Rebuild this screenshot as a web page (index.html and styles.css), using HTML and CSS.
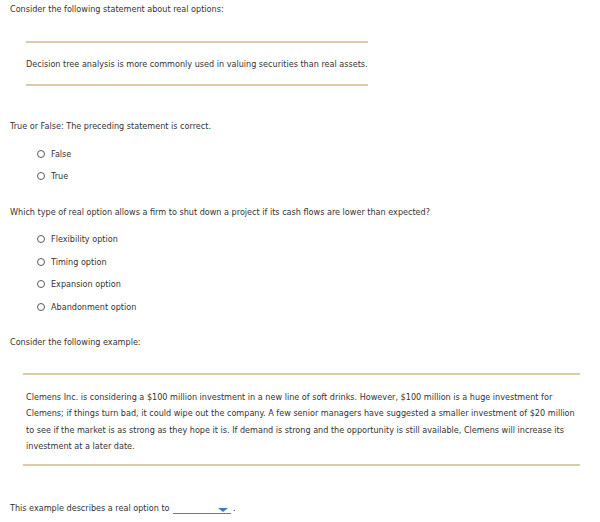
FILE: index.html
```html
<!DOCTYPE html>
<html>
<head>
<meta charset="utf-8">
<link rel="stylesheet" href="styles.css">
</head>
<body>
<div class="page">
  <p class="q q-first">Consider the following statement about real options:</p>
  <div class="quote quote-short">
    <p>Decision tree analysis is more commonly used in valuing securities than real assets.</p>
  </div>
  <p class="q q-gap">True or False: The preceding statement is correct.</p>
  <ul class="choices">
    <li><span class="radio"></span>False</li>
    <li><span class="radio"></span>True</li>
  </ul>
  <p class="q q-next">Which type of real option allows a firm to shut down a project if its cash flows are lower than expected?</p>
  <ul class="choices choices-4">
    <li><span class="radio"></span>Flexibility option</li>
    <li><span class="radio"></span>Timing option</li>
    <li><span class="radio"></span>Expansion option</li>
    <li><span class="radio"></span>Abandonment option</li>
  </ul>
  <p class="q q-next2">Consider the following example:</p>
  <div class="quote quote-long">
    <p>Clemens Inc. is considering a $100 million investment in a new line of soft drinks. However, $100 million is a huge investment for Clemens; if things turn bad, it could wipe out the company. A few senior managers have suggested a smaller investment of $20 million to see if the market is as strong as they hope it is. If demand is strong and the opportunity is still available, Clemens will increase its investment at a later date.</p>
  </div>
  <p class="q q-last">This example describes a real option to<span class="select"><span class="caret"></span></span> .</p>
</div>
</body>
</html>
```
FILE: styles.css
```css
html, body {
  margin: 0;
  padding: 0;
  background: #fff;
}
body {
  font-family: "DejaVu Sans", Verdana, sans-serif;
  font-size: 8.1px;
  color: #333;
}
.page {
  padding: 3px 10px 0 10px;
}
p {
  margin: 0;
  line-height: 12px;
}
.q-first { margin-top: 0; }
.q-gap { margin-top: 34px; }
.q-last { margin-top: 36px; }
.q-next { margin-top: 24px; }
.q-next2 { margin-top: 23px; }
.quote {
  border-top: 2px solid #d9cda8;
  border-bottom: 2px solid #d9cda8;
}
.quote-short {
  display: inline-block;
  margin: 26px 0 0 16px;
  padding: 15px 0 14px 0;
}
.quote-long {
  margin: 25px 10px 0 13px;
  padding: 14px 0 10px 3px;
}
.quote-long p {
  line-height: 16.3px;
}
.choices {
  list-style: none;
  margin: 16px 0 0 27px;
  padding: 0;
}
.choices li {
  display: flex;
  align-items: center;
  height: 12px;
  line-height: 12px;
  margin-bottom: 10px;
}
.choices li:last-child { margin-bottom: 0; }
.choices-4 { margin-top: 15px; }
.choices-4 li { margin-bottom: 10.7px; }
.radio {
  width: 6px;
  height: 6px;
  border: 1px solid #5a5a5a;
  border-radius: 50%;
  margin-right: 6px;
  flex: none;
}
.select {
  display: inline-block;
  position: relative;
  width: 58px;
  height: 9px;
  border-bottom: 1px solid #3f86c0;
  vertical-align: -3px;
  margin-left: 3px;
}
.caret {
  position: absolute;
  right: 3px;
  top: 4px;
  width: 0;
  height: 0;
  border-left: 5px solid transparent;
  border-right: 5px solid transparent;
  border-top: 4px solid #3a7cbc;
}
```
